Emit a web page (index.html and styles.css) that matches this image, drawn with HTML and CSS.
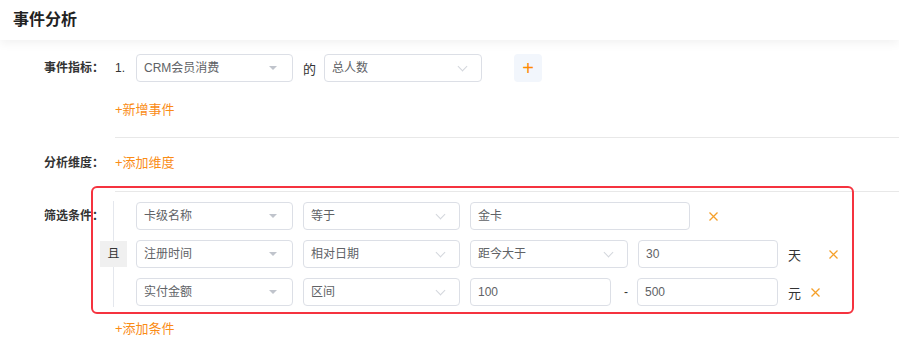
FILE: index.html
```html
<!DOCTYPE html>
<html lang="zh-CN">
<head>
    <meta charset="UTF-8">
    <title>事件分析</title>
    <link rel="stylesheet" href="styles.css">
</head>
<body>
    <header class="page-header">事件分析</header>

    <main class="panel">
        <!-- 事件指标 -->
        <section class="form-row metric-row">
            <div class="form-label">事件指标：</div>
            <div class="form-body">
                <div class="line">
                    <span class="index">1.</span>
                    <div class="select w-157"><span>CRM会员消费</span><i class="caret"></i></div>
                    <span class="word">的</span>
                    <div class="select w-158"><span>总人数</span><i class="chevron"></i></div>
                    <button class="add-btn">+</button>
                </div>
                <a class="link-add link-event">+新增事件</a>
            </div>
        </section>

        <!-- 分析维度 -->
        <section class="form-row dim-row">
            <div class="form-label">分析维度：</div>
            <div class="form-body">
                <a class="link-add">+添加维度</a>
            </div>
        </section>

        <!-- 筛选条件 -->
        <section class="form-row filter-row">
            <div class="form-label">筛选条件：</div>
            <div class="filter-body">
                <div class="cond-group">
                    <div class="relation"><span class="relation-tag">且</span></div>
                    <div class="cond-list">
                        <div class="cond">
                            <div class="select w-157"><span>卡级名称</span><i class="caret"></i></div>
                            <div class="select w-157"><span>等于</span><i class="chevron"></i></div>
                            <div class="input w-220">金卡</div>
                            <svg class="remove r-1" width="9" height="9" viewBox="0 0 9 9"><path d="M0.5 0.5L8.5 8.5M8.5 0.5L0.5 8.5"/></svg>
                        </div>
                        <div class="cond">
                            <div class="select w-157"><span>注册时间</span><i class="caret"></i></div>
                            <div class="select w-157"><span>相对日期</span><i class="chevron"></i></div>
                            <div class="select w-158"><span>距今大于</span><i class="chevron"></i></div>
                            <div class="input w-140">30</div>
                            <span class="unit">天</span>
                            <svg class="remove r-2" width="9" height="9" viewBox="0 0 9 9"><path d="M0.5 0.5L8.5 8.5M8.5 0.5L0.5 8.5"/></svg>
                        </div>
                        <div class="cond">
                            <div class="select w-157"><span>实付金额</span><i class="caret"></i></div>
                            <div class="select w-157"><span>区间</span><i class="chevron"></i></div>
                            <div class="input w-141">100</div>
                            <span class="dash">-</span>
                            <div class="input w-141">500</div>
                            <span class="unit">元</span>
                            <svg class="remove r-3" width="9" height="9" viewBox="0 0 9 9"><path d="M0.5 0.5L8.5 8.5M8.5 0.5L0.5 8.5"/></svg>
                        </div>
                    </div>
                </div>
                <a class="link-add link-cond">+添加条件</a>
            </div>
        </section>

        <div class="highlight"></div>
    </main>
</body>
</html>
```

FILE: styles.css
```css
* {
    margin: 0;
    padding: 0;
    box-sizing: border-box;
}

body {
    font-family: "Liberation Sans", "Noto Sans CJK SC", sans-serif;
    font-size: 12px;
    color: #333;
    background: #fff;
}

/* Header */
.page-header {
    height: 40px;
    line-height: 40px;
    padding-left: 13px;
    font-size: 16px;
    font-weight: bold;
    color: #222;
    background: #fff;
    box-shadow: 0 3px 10px rgba(0, 0, 0, 0.06);
    position: relative;
    z-index: 1;
}

.panel {
    position: relative;
    padding-top: 14px;
}

/* Rows */
.form-row {
    display: flex;
}

.form-label {
    width: 104px;
    flex: none;
    text-align: right;
    height: 28px;
    line-height: 28px;
    font-weight: bold;
    color: #333;
    font-size: 12px;
    white-space: nowrap;
}

.form-body {
    flex: 1;
    margin-left: 11px;
}

.line {
    display: flex;
    align-items: center;
    height: 28px;
}

.index {
    width: 21px;
    color: #333;
}

.word {
    width: 31px;
    padding-left: 10px;
    color: #333;
    font-size: 13px;
}

.metric-row .form-body {
    border-bottom: 1px solid #e8e8e8;
    padding-bottom: 17px;
}

.link-add {
    display: block;
    color: #fa8c16;
    font-size: 13px;
    line-height: 20px;
    cursor: pointer;
}

.link-event {
    margin-top: 18px;
}

.dim-row {
    height: 54px;
    padding-top: 11px;
}

.dim-row .form-body {
    border-bottom: 1px solid #e8e8e8;
}

.dim-row .form-label,
.dim-row .link-add {
    line-height: 28px;
}

.filter-row {
    padding-top: 10px;
}

/* Controls */
.select,
.input {
    height: 28px;
    border: 1px solid #dcdfe6;
    border-radius: 4px;
    background: #fff;
    color: #606266;
    line-height: 26px;
    padding-left: 7px;
    font-size: 12px;
    flex: none;
}

.select {
    display: flex;
    justify-content: space-between;
    align-items: center;
    padding-right: 12px;
}

.w-157 { width: 157px; }
.w-158 { width: 158px; }
.w-140 { width: 140px; }
.w-141 { width: 141px; }
.w-220 { width: 220px; }

.caret {
    width: 0;
    height: 0;
    border-left: 4px solid transparent;
    border-right: 4px solid transparent;
    border-top: 4px solid #c0c4cc;
    margin-right: 3px;
}

.chevron {
    width: 7px;
    height: 7px;
    border-right: 1px solid #d3d6dc;
    border-bottom: 1px solid #d3d6dc;
    transform: rotate(45deg);
    margin-top: -4px;
    margin-right: 3px;
}

.add-btn {
    width: 28px;
    height: 28px;
    margin-left: 32px;
    border: none;
    border-radius: 4px;
    background: #f2f6fc;
    color: #ff8a00;
    font-size: 20px;
    line-height: 28px;
    font-family: "Liberation Sans", sans-serif;
}

/* Filter */
.filter-body {
    flex: 1;
    margin-left: -4px;
}

.cond-group {
    display: flex;
}

.relation {
    width: 27px;
    display: flex;
    align-items: center;
    background: linear-gradient(#e4e7ed, #e4e7ed) center / 1px 100% no-repeat;
    margin-top: -1px;
    margin-bottom: -1px;
}

.relation-tag {
    width: 27px;
    height: 26px;
    line-height: 26px;
    text-align: center;
    background: #f0f0f0;
    color: #333;
    font-size: 12px;
}

.cond-list {
    margin-left: 9px;
    display: flex;
    flex-direction: column;
    gap: 10px;
}

.cond {
    display: flex;
    align-items: center;
    gap: 10px;
    height: 28px;
}

.unit {
    font-size: 13px;
    color: #333;
}

.dash {
    width: 12px;
    text-align: center;
    color: #333;
}

.cond .dash {
    margin: 0 -5px 0 -1px;
}

.remove {
    flex: none;
    fill: none;
    stroke: #f5a02a;
    stroke-width: 1.3;
}

.r-1 { margin-left: 9px; }
.r-2 { margin-left: 18px; }
.r-3 { margin-left: 0; }

.link-cond {
    margin-top: 13px;
    margin-left: 15px;
}

/* Annotation box drawn over the filter area */
.highlight {
    position: absolute;
    left: 91px;
    top: 146px;
    width: 763px;
    height: 128px;
    border: 2px solid #f5333f;
    border-radius: 6px;
    pointer-events: none;
}
```
